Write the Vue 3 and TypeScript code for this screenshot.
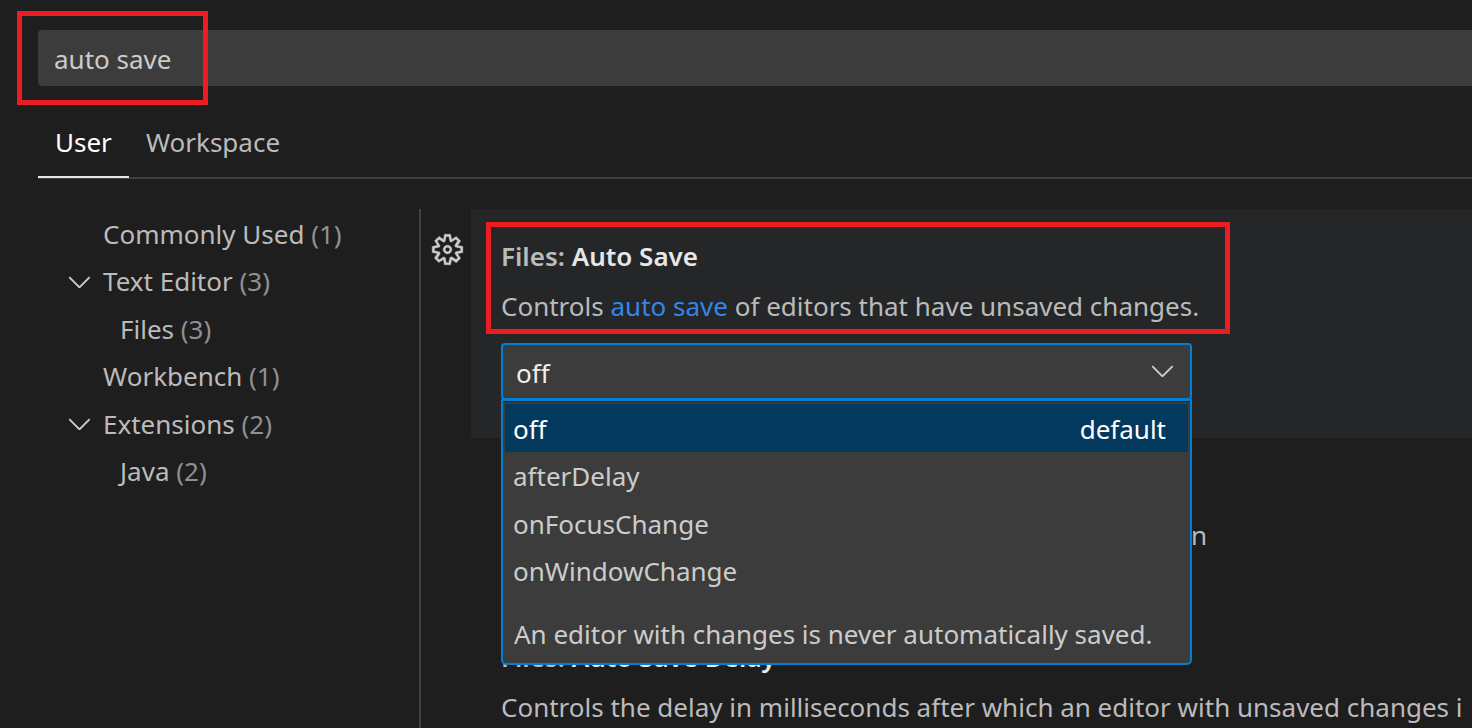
<script setup lang="ts">
import { ref } from 'vue'

interface TreeItem {
  label: string
  count: number
  expanded?: boolean
  nested?: boolean
}

const query = ref('auto save')
const activeTab = ref('User')
const tabs = ['User', 'Workspace']

const tree: TreeItem[] = [
  { label: 'Commonly Used', count: 1 },
  { label: 'Text Editor', count: 3, expanded: true },
  { label: 'Files', count: 3, nested: true },
  { label: 'Workbench', count: 1 },
  { label: 'Extensions', count: 2, expanded: true },
  { label: 'Java', count: 2, nested: true },
]

const options = ['off', 'afterDelay', 'onFocusChange', 'onWindowChange']
const selected = ref('off')
</script>

<template>
  <main class="settings">
    <header class="search">
      <input v-model="query" class="search-input" type="text" aria-label="Search settings" />
      <span class="mark mark-search" aria-hidden="true"></span>
    </header>

    <div class="tabs" role="tablist">
      <button
        v-for="tab in tabs"
        :key="tab"
        type="button"
        role="tab"
        class="tab"
        :class="{ active: tab === activeTab }"
        :aria-selected="tab === activeTab"
        @click="activeTab = tab"
      >{{ tab }}</button>
    </div>

    <div class="body">
      <nav class="tree" aria-label="Settings groups">
        <button
          v-for="item in tree"
          :key="item.label"
          type="button"
          class="tree-item"
          :class="{ nested: item.nested }"
        >
          <span class="twistie">
            <svg v-if="item.expanded" class="icon" viewBox="0 0 16 16" aria-hidden="true">
              <path d="M7.976 10.072l4.357-4.357.62.618L8.284 11h-.618L3 6.333l.619-.618 4.357 4.357z" />
            </svg>
          </span>
          <span>{{ item.label }} <span class="count">({{ item.count }})</span></span>
        </button>
      </nav>

      <div class="gutter">
        <button type="button" class="gear" aria-label="More actions">
          <svg class="icon" viewBox="0 0 16 16" aria-hidden="true">
            <path fill-rule="evenodd" stroke="#cccccc" stroke-width=".2" d="M9.1 4.4L8.6 2H7.4l-.5 2.4-.7.3-2-1.3-.9.8 1.3 2-.2.7-2.4.5v1.2l2.4.5.3.8-1.3 2 .8.8 2-1.3.8.3.4 2.3h1.2l.5-2.4.8-.3 2 1.3.8-.8-1.3-2 .3-.8 2.3-.4V7.4l-2.4-.5-.3-.8 1.3-2-.8-.8-2 1.3-.7-.2zM9.4 1l.5 2.4L12 2.1l2 2-1.4 2.1 2.4.4v2.8l-2.4.5L14 12l-2 2-2.1-1.4-.5 2.4H6.6l-.5-2.4L4 13.9l-2-2 1.4-2.1L1 9.4V6.6l2.4-.5L2.1 4l2-2 2.1 1.4.4-2.4h2.8zm.6 7c0 1.1-.9 2-2 2s-2-.9-2-2 .9-2 2-2 2 .9 2 2zM8 9c.6 0 1-.4 1-1s-.4-1-1-1-1 .4-1 1 .4 1 1 1z" />
          </svg>
        </button>
      </div>

      <div class="list">
        <section class="setting focused">
          <h2 class="title"><span class="category">Files:</span> Auto Save</h2>
          <p class="description">Controls <a href="#auto-save">auto save</a> of editors that have unsaved changes.</p>
          <span class="mark mark-setting" aria-hidden="true"></span>

          <div class="dropdown">
            <select v-model="selected" class="select" aria-label="Files: Auto Save">
              <option v-for="option in options" :key="option" :value="option">{{ option }}</option>
            </select>
            <svg class="icon select-arrow" viewBox="0 0 16 16" aria-hidden="true">
              <path d="M7.976 10.072l4.357-4.357.62.618L8.284 11h-.618L3 6.333l.619-.618 4.357 4.357z" />
            </svg>

            <div class="popup">
              <div class="options" role="listbox" aria-label="Auto Save options">
                <button
                  v-for="option in options"
                  :key="option"
                  type="button"
                  role="option"
                  class="option"
                  :class="{ chosen: option === selected }"
                  :aria-selected="option === selected"
                  @click="selected = option"
                >
                  <span>{{ option }}</span>
                  <span v-if="option === 'off'">default</span>
                </button>
              </div>
              <p class="hint">An editor with changes is never automatically saved.</p>
            </div>
          </div>
        </section>

        <section class="setting covered">
          <p class="description tail">n</p>
        </section>

        <section class="setting">
          <h2 class="title"><span class="category">Files:</span> Auto Save Delay</h2>
          <p class="description">Controls the delay in milliseconds after which an editor with unsaved changes i</p>
        </section>
      </div>
    </div>
  </main>
</template>

<style>
body {
  margin: 0;
  background: #1e1e1e;
}
</style>

<style scoped>
.settings {
  box-sizing: border-box;
  height: 100vh;
  overflow: hidden;
  padding: 30px 0 0 38px;
  display: flex;
  flex-direction: column;
  background: #1e1e1e;
  color: #bbbbbb;
  font-family: "Noto Sans", "Open Sans", sans-serif;
  font-size: 26px;
  line-height: 36px;
}

button,
input,
select {
  font: inherit;
  color: inherit;
  margin: 0;
  padding: 0;
  border: 0;
  outline: 0;
  background: none;
}

h2,
p {
  margin: 0;
}

.icon {
  display: block;
  width: 35px;
  height: 35px;
  fill: #cccccc;
}

.mark {
  position: absolute;
  box-sizing: border-box;
  border: 5px solid #ed1c24;
  pointer-events: none;
}

.search {
  position: relative;
  flex: none;
}

.search-input {
  box-sizing: border-box;
  display: block;
  width: 100%;
  height: 56px;
  padding: 2px 16px 0;
  border-radius: 4px 0 0 4px;
  background: #3c3c3c;
  color: #cccccc;
}

.mark-search {
  left: -21px;
  top: -19px;
  width: 191px;
  height: 94px;
}

.tabs {
  flex: none;
  display: flex;
  margin-top: 22px;
  height: 69px;
  border-bottom: 2px solid #404040;
}

.tab {
  box-sizing: border-box;
  height: 70px;
  padding: 2px 17px;
  border-bottom: 2px solid transparent;
}

.tab.active {
  color: #ffffff;
  border-bottom-color: #e7e7e7;
}

.body {
  flex: 1;
  display: grid;
  grid-template-columns: 381px 52px minmax(0, 1fr);
  padding-top: 30px;
}

.tree {
  display: grid;
  grid-auto-rows: 1fr;
  height: 285px;
  padding-top: 1px;
}

.tree-item {
  display: flex;
  align-items: center;
  padding-left: 24px;
  text-align: left;
}

.tree-item.nested {
  padding-left: 41px;
}

.twistie {
  width: 41px;
}

.count {
  color: #909090;
}

.gutter {
  border-left: 2px solid #404040;
}

.gear {
  display: block;
  margin: 23px 0 0 9px;
}

.setting {
  position: relative;
  padding: 29px 0 38px 30px;
  white-space: nowrap;
}

.focused {
  background: #252628;
}

.title {
  font-size: 26px;
  font-weight: 600;
  line-height: 36px;
  color: #e7e7e7;
}

.category {
  color: #bbbbbb;
}

.description {
  margin-top: 14px;
}

.description a {
  color: #3485e6;
  text-decoration: none;
}

.covered {
  padding-top: 65px;
  padding-bottom: 57px;
}

.tail {
  width: 706px;
  text-align: right;
}

.mark-setting {
  left: 15px;
  top: 13px;
  width: 744px;
  height: 112px;
}

.dropdown {
  position: relative;
  width: 691px;
  margin-top: 19px;
}

.select {
  box-sizing: border-box;
  display: block;
  width: 100%;
  height: 57px;
  padding: 2px 13px 0;
  appearance: none;
  border: 2px solid #007fd4;
  border-radius: 4px;
  background: #3c3c3c;
  color: #f0f0f0;
}

.select-arrow {
  position: absolute;
  right: 12px;
  top: 10px;
}

.popup {
  position: absolute;
  z-index: 1;
  top: 56px;
  left: 0;
  right: 0;
  box-sizing: border-box;
  padding: 3px 2px 11px;
  border: 2px solid #007fd4;
  border-radius: 0 0 5px 5px;
  background: #3c3c3c;
  box-shadow: inset 0 1px 0 #252526;
}

.options {
  display: grid;
  grid-auto-rows: 1fr;
  height: 190px;
}

.option {
  display: flex;
  align-items: center;
  justify-content: space-between;
  padding: 2px 22px 0 8px;
  color: #cccccc;
}

.option.chosen {
  background: #04395e;
  color: #ffffff;
}

.hint {
  padding: 22px 9px 0;
  color: #cccccc;
}
</style>
